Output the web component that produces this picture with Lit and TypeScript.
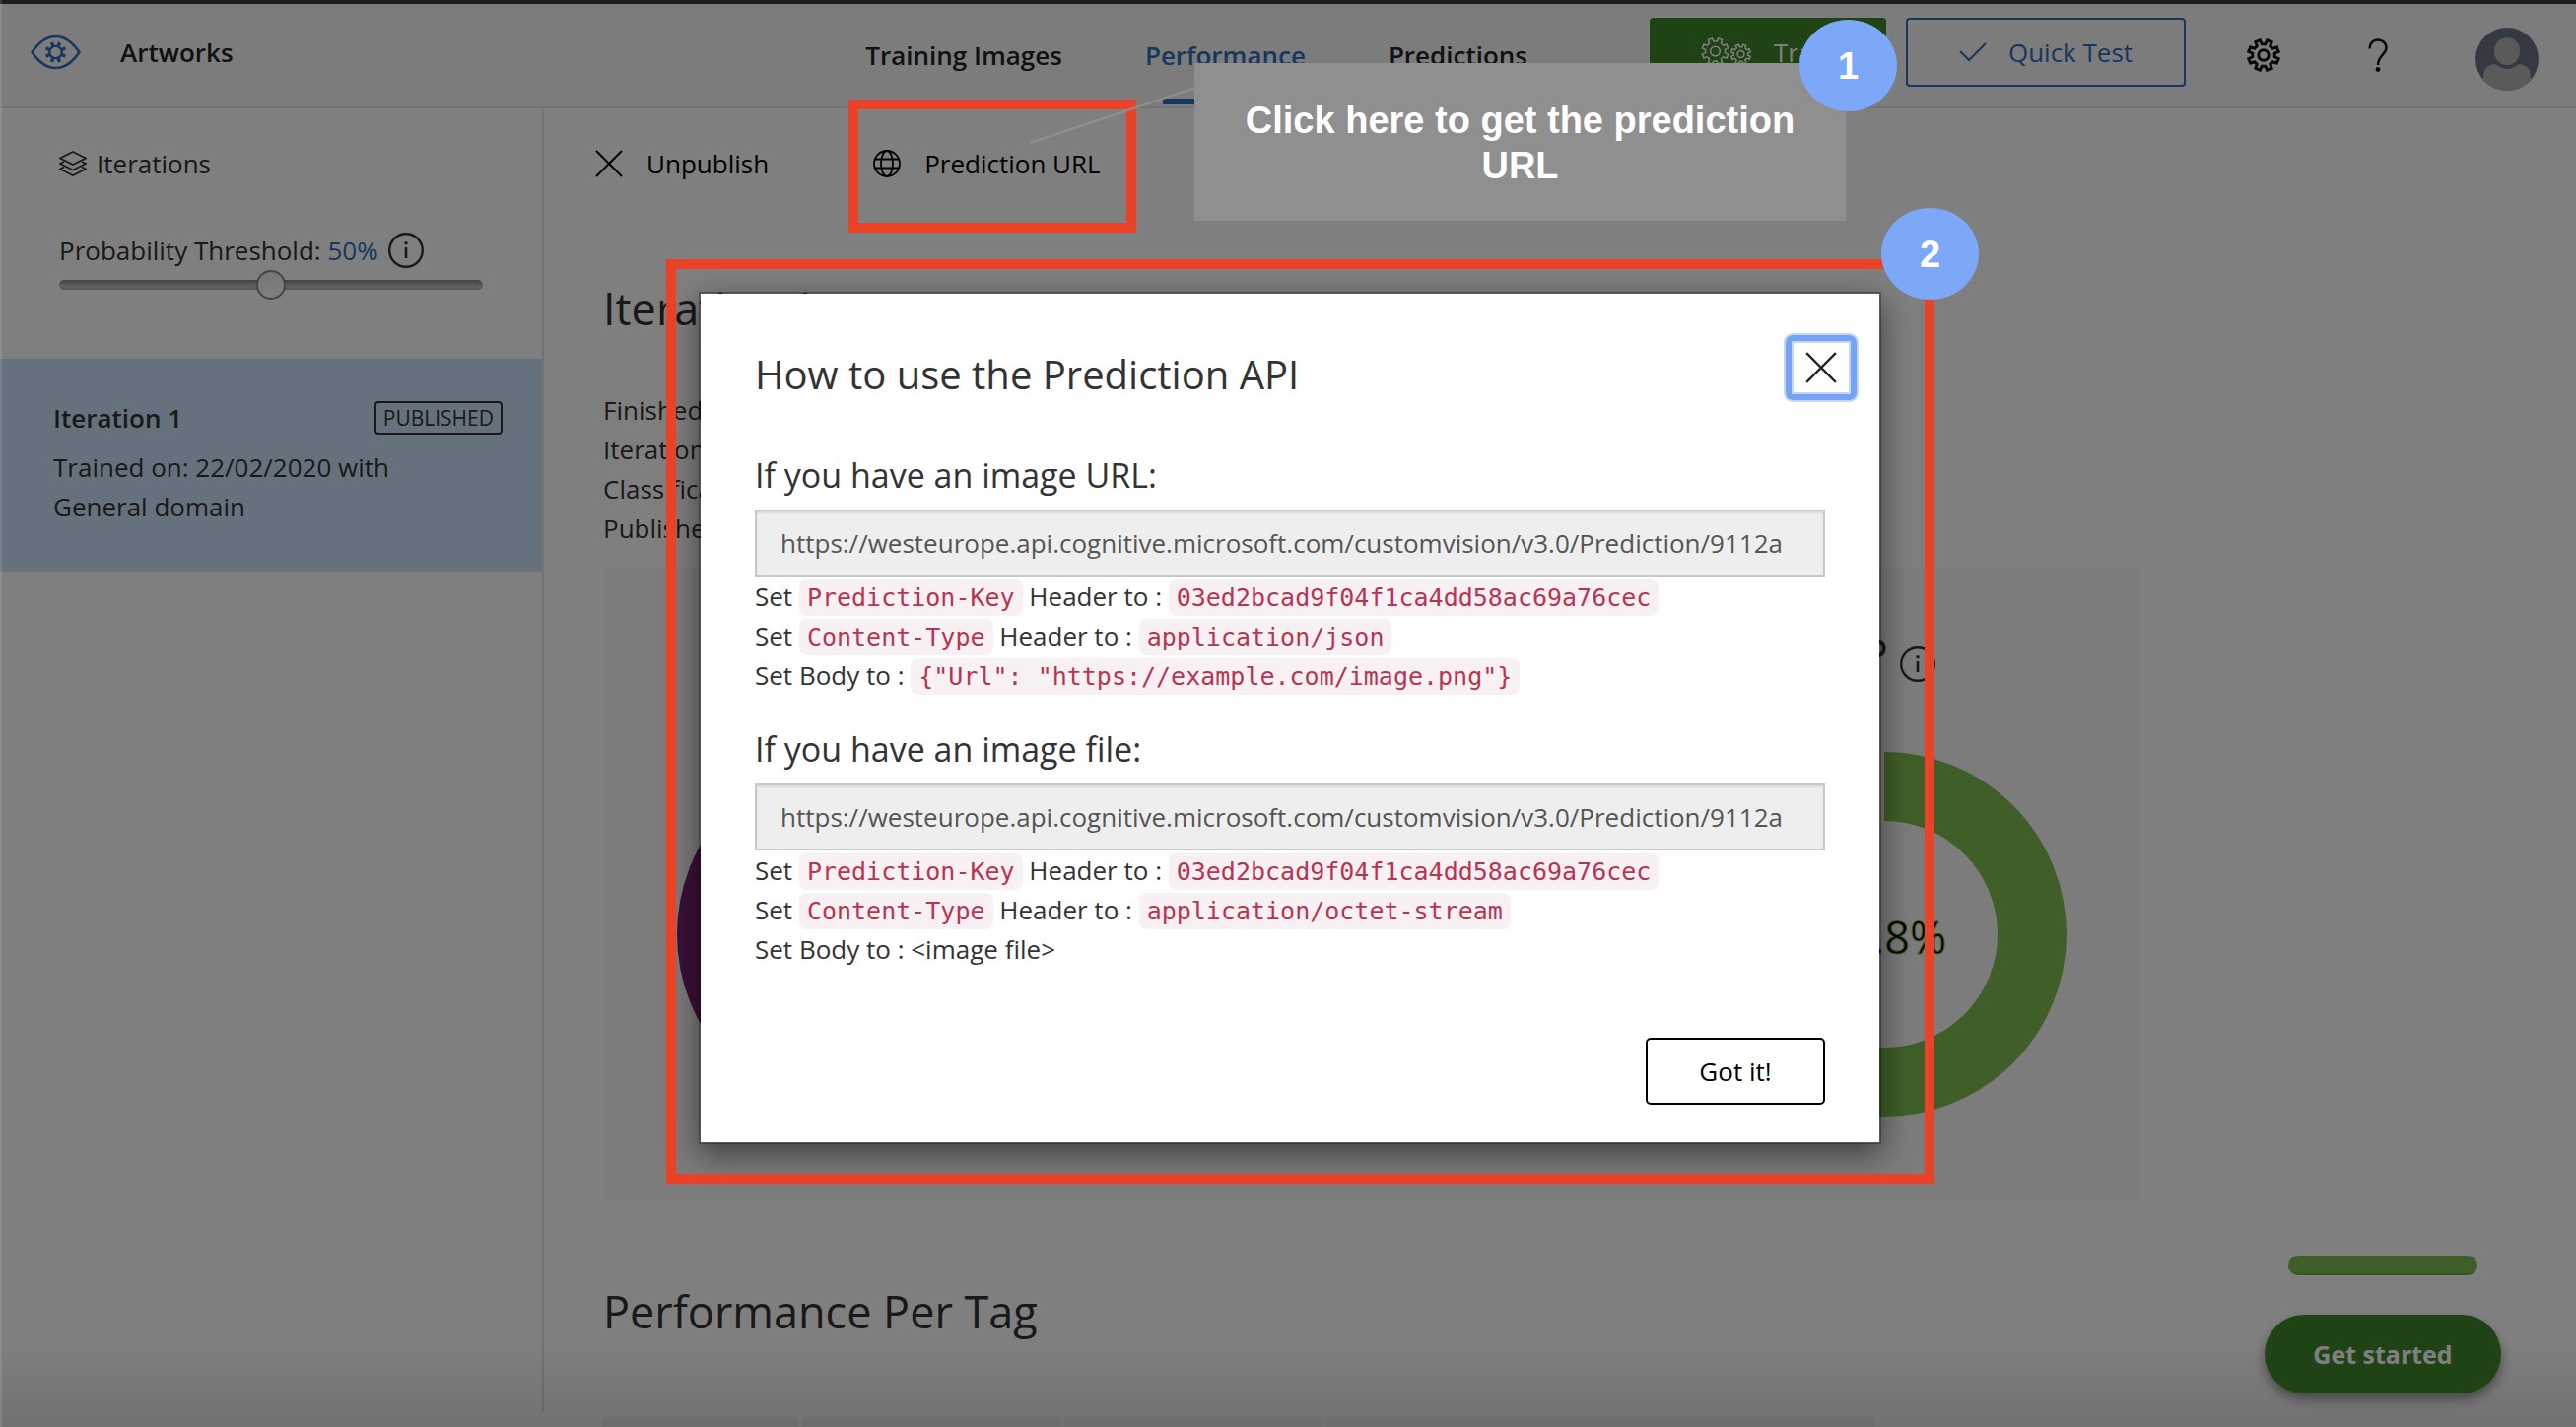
import { LitElement, html, css, svg, nothing } from "lit";
import { customElement, property } from "lit/decorators.js";

/** Outline of a cog wheel with evenly spaced, slightly tapered teeth. */
function cog(cx: number, cy: number, outer: number, inner: number, teeth = 8): string {
  const step = (Math.PI * 2) / teeth;
  const pts: string[] = [];
  for (let i = 0; i < teeth; i++) {
    const a = i * step + step / 2;
    for (const [r, o] of [[inner, -0.3], [outer, -0.2], [outer, 0.2], [inner, 0.3]]) {
      const t = a + o * step;
      pts.push(`${(cx + r * Math.sin(t)).toFixed(2)} ${(cy - r * Math.cos(t)).toFixed(2)}`);
    }
  }
  return `M${pts.join("L")}Z`;
}

const infoIcon = html`<svg class="info" viewBox="0 0 36 36" width="36" height="36" aria-hidden="true">
  <circle cx="18" cy="18" r="16.8" fill="none" stroke="currentColor" stroke-width="2.400" />
  <path d="M18 15V26" stroke="currentColor" stroke-width="2.600" />
  <circle cx="18" cy="10.8" r="1.700" fill="currentColor" />
</svg>`;

const crossIcon = (size: number) => html`<svg viewBox="0 0 28 28" width=${size} height=${size} aria-hidden="true">
  <path d="M1 1L27 27M27 1L1 27" fill="none" stroke="currentColor" stroke-width="2" />
</svg>`;

@customElement("score-gauge")
class ScoreGauge extends LitElement {
  @property() label = "";
  @property() value = "";
  @property() color = "#80be50";
  @property({ type: Number }) share = 1;

  static styles = css`
    :host { display: flex; flex-direction: column; align-items: center; gap: 71px; }
    .label { display: flex; align-items: flex-end; gap: 12px; height: 56px; font-size: 45px; line-height: 56px; }
    .value { font-size: 45px; fill: #000; stroke-width: 1; text-anchor: middle; }
  `;

  render() {
    const length = 2 * Math.PI * 150;
    return html`
      <div class="label">${this.label ? html`<span>${this.label}</span>${infoIcon}` : nothing}</div>
      <svg viewBox="0 0 370 370" width="370" height="370">
        <circle cx="185" cy="185" r="150" fill="none" stroke=${this.color} stroke-width="70"
          stroke-dasharray="${length * this.share} ${length}" transform="rotate(-90 185 185)" />
        ${this.value
          ? svg`<text class="value" x="185" y="205" stroke=${this.color}>${this.value}</text>`
          : nothing}
      </svg>
    `;
  }
}

interface HeaderRow { name: string; value: string; }

@customElement("api-usage")
class ApiUsage extends LitElement {
  @property() heading = "";
  @property() field = "";
  @property() url = "";
  @property({ attribute: false }) headers: HeaderRow[] = [];
  @property() body = "";
  @property({ type: Boolean }) literal = false;

  static styles = css`
    :host { display: block; }
    .heading { display: block; margin: 0; font-size: 34px; font-weight: 400; line-height: 48px; }
    .url {
      display: block; box-sizing: border-box; width: 100%; height: 68px; margin: 11px 0 0; padding: 0 24px;
      border: 2px solid #c8c8c8; border-radius: 0; background: #eee; color: #555;
      font: 400 26px/40px "Open Sans", sans-serif; box-shadow: inset 0 2px 2px rgba(0, 0, 0, 0.08); outline: none;
    }
    p { margin: 0; line-height: 40px; }
    code {
      padding: 4px 8px; border-radius: 8px; background: #f8f1f3; color: #bb3351;
      font: 400 25px/30px "DejaVu Sans Mono", monospace;
    }
  `;

  render() {
    return html`
      <label class="heading" for=${this.field}>${this.heading}</label>
      <input class="url" id=${this.field} type="text" readonly .value=${this.url} />
      ${this.headers.map((h) => html`<p>Set <code>${h.name}</code> Header to : <code>${h.value}</code></p>`)}
      <p>Set Body to : ${this.literal ? html`<code>${this.body}</code>` : this.body}</p>
    `;
  }
}

const ENDPOINT = "https://westeurope.api.cognitive.microsoft.com/customvision/v3.0/Prediction/9112a";
const KEY = "03ed2bcad9f04f1ca4dd58ac69a76cec";

@customElement("app-root")
class AppRoot extends LitElement {
  static styles = css`
    :host {
      display: block; position: relative; height: 100vh; overflow: hidden;
      font: 400 26px/40px "Open Sans", sans-serif; color: #333; background: #fff;
    }
    * { box-sizing: border-box; }
    button { font: inherit; color: inherit; background: none; border: 0; padding: 0; margin: 0; }
    a { color: inherit; text-decoration: none; }
    h1, h2, p { margin: 0; font-weight: 400; }
    svg { display: block; flex: none; }

    .page { height: 100%; display: flex; flex-direction: column; border-top: 4px solid #3c3c3c; }
    .header {
      flex: none; display: flex; align-items: flex-start; height: 106px; padding: 14px 38px 0 31px;
      background: #f8f8f8; border-bottom: 2px solid #e8e8e8;
    }
    .brand { display: flex; align-items: center; gap: 40px; height: 70px; color: #222; font-weight: 600; }
    .nav { display: flex; align-self: stretch; gap: 84px; margin-left: auto; color: #222; font-weight: 600; }
    .tab { display: flex; flex-direction: column; padding: 18px 0 2px; }
    .tab.active { color: #2e6ebc; }
    .tab.active::after { content: ""; height: 6px; margin: auto 18px 0; background: currentColor; }
    .train, .test { display: flex; align-items: center; justify-content: center; height: 70px; border-radius: 4px; }
    .train { width: 240px; margin-left: 124px; gap: 22px; background: #3e862a; color: #fff; }
    .test { width: 284px; margin: 0 62px 0 20px; gap: 22px; border: 2px solid #2e6ebc; color: #2e6ebc; }
    .tools { display: flex; gap: 82px; color: #111; }
    .tool { display: flex; align-items: center; height: 76px; }
    .tool.account { height: 84px; }

    .columns { flex: 1; min-height: 0; display: flex; }
    .sidebar { flex: none; width: 552px; padding-top: 36px; border-right: 2px solid #e4e4e4; margin-bottom: 14px; }
    .side-title { display: flex; align-items: center; gap: 10px; padding-left: 60px; }
    .threshold { padding: 48px 60px 60px; }
    .threshold-row { display: flex; align-items: center; gap: 10px; white-space: nowrap; }
    .threshold output { color: #2e6ebc; }
    .slider { display: block; width: 430px; height: 30px; margin: 0; appearance: none; background: none; }
    .slider::-webkit-slider-runnable-track {
      height: 10px; border-radius: 5px; background: linear-gradient(#868686, #c4c4c4 70%, #a4a4a4);
    }
    .slider::-webkit-slider-thumb {
      appearance: none; width: 30px; height: 30px; margin-top: -10px; border-radius: 50%;
      border: 2px solid #8a8a8a; background: linear-gradient(#ececec, #fff);
    }
    .iteration { padding: 40px 40px 44px 54px; background: #cae4fa; border-bottom: 2px solid #ece4e4; }
    .iteration-head { display: flex; align-items: center; justify-content: space-between; margin-bottom: 10px; }
    .iteration-name { font-weight: 600; }
    .iteration-info { padding-right: 60px; }
    .badge { height: 34px; padding: 0 7px; border: 2px solid #333; border-radius: 4px; font-size: 21px; line-height: 31px; }

    .main { flex: 1; min-width: 0; padding: 36px 52px 0; }
    .commands { display: flex; gap: 106px; color: #000; }
    .command { display: flex; align-items: center; gap: 24px; }
    .content { padding-left: 8px; }
    .title { font-size: 45px; line-height: 60px; }
    .summary { margin-top: 97px; }
    .facts { margin: 53px 0 20px; }
    .scores {
      display: grid; grid-template-columns: repeat(3, 1fr); max-width: 1560px; height: 642px; padding-top: 60px;
      background: #f8f8f8;
    }
    .per-tag { margin: 83px 0 77px; }
    .tags { display: grid; grid-template-columns: 198px 262px 262px 1fr; gap: 4px; max-width: 1290px; height: 40px; }
    .tags span { background: #f6f6f6; }

    .starter { position: absolute; right: 76px; bottom: 34px; display: flex; flex-direction: column; align-items: center; gap: 40px; }
    .starter-bar { width: 192px; height: 20px; border-radius: 10px; background: #80be50; border-bottom: 2px solid #70a844; }
    .starter-button {
      width: 240px; height: 80px; border-radius: 40px; background: #3e862a; color: #fff; font-weight: 700;
      font-size: 25px; box-shadow: 0 6px 12px rgba(0, 0, 0, 0.4);
    }
    .fade { position: absolute; left: 0; right: 0; bottom: 0; height: 90px; background: linear-gradient(transparent, rgba(0, 0, 0, 0.11)); }

    .scrim {
      position: absolute; inset: 0; display: flex; justify-content: center; align-items: flex-start;
      padding: 296px 0 0 2px; background: rgba(0, 0, 0, 0.5); border-left: 2px solid rgba(255, 255, 255, 0.12);
    }
    .dialog {
      width: 1200px; padding: 42px 55px 38px; background: #fff; background-clip: padding-box;
      border: 2px solid rgba(0, 0, 0, 0.28); box-shadow: 0 10px 30px rgba(0, 0, 0, 0.5);
    }
    .dialog-head { display: flex; align-items: flex-start; justify-content: space-between; height: 118px; margin-right: -32px; }
    .dialog-title { padding-top: 10px; font-size: 40px; line-height: 60px; }
    .close {
      display: flex; align-items: center; justify-content: center; width: 72px; height: 66px; color: #222;
      border: 6px solid #77a3f2; border-radius: 7px; box-shadow: 0 0 0 2px #c3d7fb, inset 0 0 0 2px #c3d7fb;
    }
    .usages { display: flex; flex-direction: column; gap: 31px; }
    .dialog-foot { display: flex; justify-content: flex-end; margin-top: 70px; }
    .confirm { width: 182px; height: 68px; border: 2px solid #000; border-radius: 5px; color: #000; }

    .notes { position: absolute; inset: 0; pointer-events: none; }
    .frame { position: absolute; border: 10px solid #eb4126; }
    .frame.url { left: 861px; top: 101px; width: 292px; height: 135px; }
    .frame.usage { left: 676px; top: 263px; width: 1287px; height: 938px; }
    .pointer { position: absolute; left: 1044px; top: 88px; }
    .note {
      position: absolute; left: 1212px; top: 64px; width: 661px; height: 160px; padding: 35px 40px 0;
      background: #8f8f8f; color: #fff; text-align: center;
      font: 700 38px/46px "Liberation Sans", sans-serif;
    }
    .step {
      position: absolute; display: flex; align-items: center; justify-content: center; width: 99px; height: 93px;
      border-radius: 50%; background: #7da7f7; color: #fff; font: 700 38px/46px "Liberation Sans", sans-serif;
    }
    .step.one { left: 1826px; top: 20px; }
    .step.two { left: 1909px; top: 211px; }
  `;

  private renderHeader() {
    return html`<header class="header">
      <a class="brand" href="#">
        <svg viewBox="0 0 51 36" width="51" height="36" aria-hidden="true">
          <path d="M1.500 18C9 7 17 2 25.500 2S42 7 49.500 18C42 29 34 34 25.500 34S9 29 1.500 18Z" fill="none"
            stroke="#2e6ebc" stroke-width="2.600" stroke-linejoin="round" />
          <path fill-rule="evenodd" fill="#2e6ebc"
            d="${cog(25.5, 18, 10.8, 7.4)}M25.500 13a5 5 0 1 0 0 10a5 5 0 1 0 0-10Z" />
        </svg>
        Artworks
      </a>
      <nav class="nav">
        <a class="tab" href="#images">Training Images</a>
        <a class="tab active" href="#performance">Performance</a>
        <a class="tab" href="#predictions">Predictions</a>
      </nav>
      <button class="train">
        <svg viewBox="0 0 52 34" width="52" height="34" fill="none" stroke="currentColor" stroke-width="1.500" aria-hidden="true">
          <path d="${cog(14.5, 16, 13.5, 10)}" /><circle cx="14.500" cy="16" r="4.800" />
          <path d="${cog(40.5, 19, 10, 7.4)}" /><circle cx="40.500" cy="19" r="3.400" />
        </svg>
        Train
      </button>
      <button class="test">
        <svg viewBox="0 0 28 20" width="28" height="20" aria-hidden="true">
          <path d="M1 9L10 18L27 1" fill="none" stroke="currentColor" stroke-width="2" />
        </svg>
        Quick Test
      </button>
      <div class="tools">
        <button class="tool" aria-label="Settings">
          <svg viewBox="0 0 34 34" width="34" height="34" fill="none" stroke="currentColor" stroke-width="3" aria-hidden="true">
            <path d="${cog(17, 17, 15.6, 11.4)}" /><circle cx="17" cy="17" r="5.200" />
          </svg>
        </button>
        <button class="tool" aria-label="Help">
          <svg viewBox="0 0 34 34" width="34" height="34" aria-hidden="true">
            <path d="M8.500 10.500C8.500 5 12.200 1.500 17 1.500S25.500 4.800 25.500 9.500C25.500 16.500 17 17 17 27" fill="none"
              stroke="currentColor" stroke-width="2.500" />
            <circle cx="17" cy="31.500" r="2.400" fill="currentColor" />
          </svg>
        </button>
        <button class="tool account" aria-label="Account">
          <svg viewBox="0 0 64 64" width="64" height="64" aria-hidden="true">
            <clipPath id="disc"><circle cx="32" cy="32" r="32" /></clipPath>
            <g clip-path="url(#disc)">
              <rect width="64" height="64" fill="#6a7283" />
              <path d="M8 64V50Q8 38 20 37Q32 47 44 37Q56 38 56 50V64Z" fill="#b4b5b6" />
              <ellipse cx="32" cy="24" rx="13" ry="14" fill="#b4b5b6" />
            </g>
          </svg>
        </button>
      </div>
    </header>`;
  }

  private renderSidebar() {
    return html`<aside class="sidebar">
      <div class="side-title">
        <svg viewBox="0 0 28 26" width="28" height="26" fill="none" stroke="currentColor" stroke-width="1.600" aria-hidden="true">
          <path d="M14 1L27 7.500L14 14L1 7.500Z" />
          <path d="M5 11L1 13L14 19.500L27 13L23 11" />
          <path d="M5 16.500L1 18.500L14 25L27 18.500L23 16.500" />
        </svg>
        Iterations
      </div>
      <div class="threshold">
        <div class="threshold-row">
          <label for="threshold">Probability Threshold: <output>50%</output></label>${infoIcon}
        </div>
        <input class="slider" id="threshold" type="range" min="0" max="100" value="50" />
      </div>
      <section class="iteration">
        <div class="iteration-head">
          <span class="iteration-name">Iteration 1</span><span class="badge">PUBLISHED</span>
        </div>
        <p class="iteration-info">Trained on: 22/02/2020 with General domain</p>
      </section>
    </aside>`;
  }

  private renderMain() {
    return html`<main class="main">
      <div class="commands">
        <button class="command">${crossIcon(28)}Unpublish</button>
        <button class="command">
          <svg viewBox="0 0 28 28" width="28" height="28" fill="none" stroke="currentColor" stroke-width="1.800" aria-hidden="true">
            <circle cx="14" cy="14" r="13" /><ellipse cx="14" cy="14" rx="6" ry="13" />
            <path d="M2 9.500H26M2 18.500H26" />
          </svg>
          Prediction URL
        </button>
      </div>
      <div class="content">
        <h1 class="title summary">Iteration 1</h1>
        <div class="facts"><p>Finished</p><p>Iteration</p><p>Classification</p><p>Published</p></div>
        <section class="scores">
          <score-gauge color="#781e70"></score-gauge>
          <score-gauge color="#2e6ebc"></score-gauge>
          <score-gauge label="AP" value="91.8%" share="0.918"></score-gauge>
        </section>
        <h2 class="title per-tag">Performance Per Tag</h2>
        <div class="tags"><span></span><span></span><span></span><span></span></div>
      </div>
    </main>`;
  }

  private renderDialog() {
    return html`<div class="scrim">
      <div class="dialog" role="dialog" aria-labelledby="dialog-title">
        <div class="dialog-head">
          <h2 class="dialog-title" id="dialog-title">How to use the Prediction API</h2>
          <button class="close" aria-label="Close">${crossIcon(32)}</button>
        </div>
        <div class="usages">
          <api-usage heading="If you have an image URL:" field="image-url" .url=${ENDPOINT}
            .headers=${[{ name: "Prediction-Key", value: KEY }, { name: "Content-Type", value: "application/json" }]}
            .body=${'{"Url": "https://example.com/image.png"}'} literal></api-usage>
          <api-usage heading="If you have an image file:" field="image-file" .url=${ENDPOINT}
            .headers=${[{ name: "Prediction-Key", value: KEY }, { name: "Content-Type", value: "application/octet-stream" }]}
            .body=${"<image file>"}></api-usage>
        </div>
        <div class="dialog-foot"><button class="confirm">Got it!</button></div>
      </div>
    </div>`;
  }

  private renderNotes() {
    return html`<div class="notes">
      <div class="frame url"></div>
      <div class="frame usage"></div>
      <svg class="pointer" viewBox="0 0 170 58" width="170" height="58" aria-hidden="true">
        <path d="M1 57L169 1" stroke="#8f8f8f" stroke-width="2" />
      </svg>
      <div class="note">Click here to get the prediction URL</div>
      <div class="step one">1</div>
      <div class="step two">2</div>
    </div>`;
  }

  render() {
    return html`
      <div class="page">
        ${this.renderHeader()}
        <div class="columns">${this.renderSidebar()}${this.renderMain()}</div>
      </div>
      <div class="fade"></div>
      <div class="starter">
        <div class="starter-bar"></div>
        <button class="starter-button">Get started</button>
      </div>
      ${this.renderDialog()} ${this.renderNotes()}
    `;
  }
}
